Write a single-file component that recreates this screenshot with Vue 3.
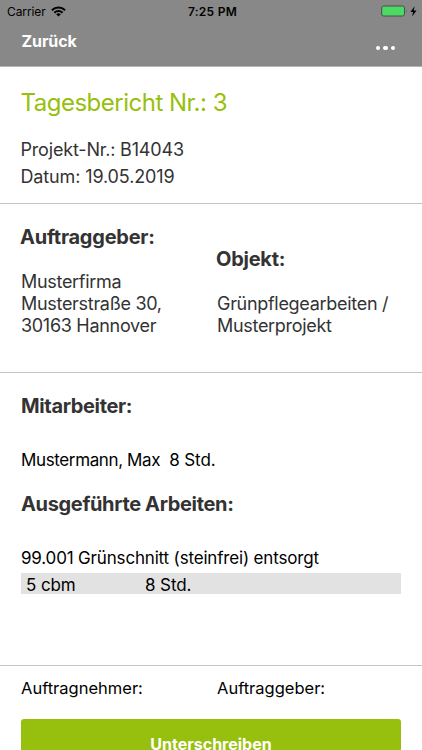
<script setup>
import { ref } from 'vue';

const report = ref({
  number: 3,
  project: 'B14043',
  date: '19.05.2019',
  client: ['Musterfirma', 'Musterstraße 30,', '30163 Hannover'],
  object: ['Grünpflegearbeiten /', 'Musterprojekt'],
  workers: [{ name: 'Mustermann, Max', hours: '8 Std.' }],
  works: [{ title: '99.001 Grünschnitt (steinfrei) entsorgt', amount: '5 cbm', hours: '8 Std.' }],
});
</script>

<template>
  <div class="screen">
    <header>
      <div class="status">
        <div class="carrier">
          <span>Carrier</span>
          <svg width="15" height="11" viewBox="0 0 15 11">
            <g fill="none" stroke="#000" stroke-width="2">
              <path d="M0.9 4.2a9.4 9.4 0 0 1 13.2 0" />
              <path d="M3.4 6.7a5.8 5.8 0 0 1 8.2 0" />
            </g>
            <path d="M5.2 8.3a3.3 3.3 0 0 1 4.6 0L7.5 10.6z" />
          </svg>
        </div>
        <div class="time">7:25 PM</div>
        <div class="power">
          <svg width="37" height="13" viewBox="0 0 37 13">
            <rect x="0.7" y="1" width="22.8" height="10" rx="2" fill="#4cd964" stroke="#4d4d4d" />
            <path d="M25 4.5q1.2 1.6 0 3.4z" fill="#4d4d4d" />
            <path d="M33.6 1.2L29.4 7h2.7L31 11.6L35.6 5.4h-2.9z" />
          </svg>
        </div>
      </div>
      <nav>
        <span class="back">Zurück</span>
        <span class="more"><i></i><i></i><i></i></span>
      </nav>
    </header>

    <section class="intro">
      <h1>Tagesbericht Nr.: {{ report.number }}</h1>
      <p>Projekt-Nr.: {{ report.project }}</p>
      <p class="date">Datum: {{ report.date }}</p>
    </section>

    <section class="parties">
      <div class="client">
        <h2>Auftraggeber:</h2>
        <p v-for="line in report.client" :key="line">{{ line }}</p>
      </div>
      <div class="object">
        <h2>Objekt:</h2>
        <p v-for="line in report.object" :key="line">{{ line }}</p>
      </div>
    </section>

    <section class="details">
      <h2 class="h-workers">Mitarbeiter:</h2>
      <div v-for="w in report.workers" :key="w.name" class="worker">
        <span>{{ w.name }}</span><span class="hours">{{ w.hours }}</span>
      </div>
      <h2 class="h-works">Ausgeführte Arbeiten:</h2>
      <template v-for="work in report.works" :key="work.title">
        <div class="work">{{ work.title }}</div>
        <div class="amounts">
          <span>{{ work.amount }}</span>
          <span>{{ work.hours }}</span>
        </div>
      </template>
    </section>

    <footer>
      <div class="labels">
        <span class="contractor">Auftragnehmer:</span>
        <span class="customer">Auftraggeber:</span>
      </div>
      <button>Unterschreiben</button>
    </footer>
  </div>
</template>

<style>
body {
  background: #fff;
  overflow: hidden;
}
</style>

<style scoped>
.screen {
  box-sizing: border-box;
  height: 750px;
  overflow: hidden;
  font-family: Inter, 'Liberation Sans', sans-serif;
  color: #333;
}
h1, h2, p {
  margin: 0;
  white-space: nowrap;
}
header {
  box-sizing: border-box;
  height: 67px;
  background: #888;
  border-bottom: 1px solid #b4b4b4;
}
.status {
  display: grid;
  grid-template-columns: 1fr auto 1fr;
  align-items: center;
  height: 22px;
  padding: 0 4px 0 7px;
  color: #000;
  font-size: 12px;
}
.carrier {
  display: flex;
  align-items: center;
  gap: 5px;
  letter-spacing: -0.1px;
}
.time {
  font-weight: 600;
  letter-spacing: 0.25px;
}
.power {
  display: flex;
  justify-content: flex-end;
}
nav {
  display: flex;
  justify-content: space-between;
  padding: 8px 27px 0 21.5px;
  color: #fff;
}
.back {
  font-size: 16px;
  font-weight: 700;
  line-height: 22px;
  letter-spacing: -0.1px;
}
.more {
  display: flex;
  gap: 3px;
  padding-top: 16px;
}
.more i {
  width: 4.4px;
  height: 4.4px;
  border-radius: 50%;
  background: #fff;
}
section {
  box-sizing: border-box;
  border-bottom: 1px solid #c4c4c4;
}
h1 {
  color: #97bf0d;
  font-size: 24px;
  font-weight: 400;
  line-height: 30px;
  letter-spacing: -0.5px;
}
h2 {
  font-size: 20px;
  font-weight: 700;
  line-height: 24px;
  letter-spacing: -0.35px;
}
p {
  font-size: 18px;
  line-height: 22px;
  letter-spacing: -0.3px;
}
.intro {
  height: 137px;
  padding: 21px 21px 0 20.5px;
}
.intro p {
  line-height: 28px;
  letter-spacing: -0.18px;
}
.intro .date {
  line-height: 26px;
  letter-spacing: -0.13px;
}
.intro h1 {
  margin-bottom: 18px;
}
.parties {
  display: grid;
  grid-template-columns: 196px 1fr;
  height: 169px;
  padding: 21px 0 0 21px;
}
.parties h2 {
  margin: 0 0 22px -1px;
  letter-spacing: -0.25px;
}
.object {
  padding-top: 22px;
}
.details {
  height: 293px;
  padding: 21px 21px 0;
  color: #000;
  font-size: 17px;
  line-height: 22px;
}
.details h2 {
  color: #333;
}
.h-workers {
  margin-bottom: 31px;
}
.worker {
  display: flex;
  gap: 9px;
  letter-spacing: -0.37px;
}
.worker .hours {
  letter-spacing: -0.1px;
}
.h-works {
  margin: 21px 0 31px;
}
.work {
  letter-spacing: -0.17px;
}
.amounts {
  display: grid;
  grid-template-columns: 119px 1fr;
  height: 21px;
  margin-top: 4px;
  padding-left: 5px;
  background: #e2e2e2;
  line-height: 24px;
  letter-spacing: -0.1px;
}
footer {
  padding: 11px 21px 0;
  color: #000;
}
.labels {
  display: grid;
  grid-template-columns: 196px 1fr;
  font-size: 16.5px;
  line-height: 22px;
}
button {
  display: block;
  width: 100%;
  height: 50px;
  margin-top: 20px;
  padding: 0;
  border: 0;
  border-radius: 3px;
  background: #97bf0d;
  color: #fff;
  font: 700 16px/50px Inter, 'Liberation Sans', sans-serif;
}
</style>
